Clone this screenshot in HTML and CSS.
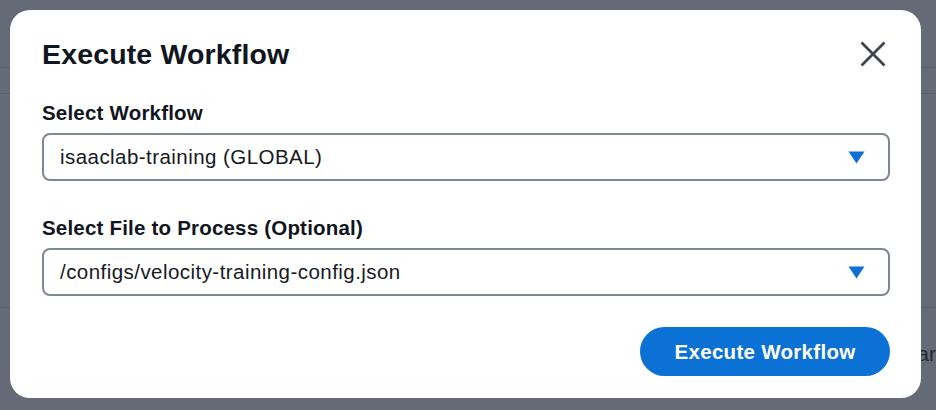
FILE: index.html
```html
<!DOCTYPE html>
<html lang="en">
<head>
<meta charset="utf-8">
<title>Execute Workflow</title>
<link rel="stylesheet" href="styles.css">
</head>
<body>
<div class="page">
  <div class="page-top"></div>
  <div class="page-tabs"></div>
  <div class="page-body"></div>
  <div class="page-foot"><span class="foot-text">ar</span></div>
</div>
<div class="overlay">
  <div class="modal" role="dialog" aria-labelledby="modal-title">
    <div class="modal-header">
      <h2 class="modal-title" id="modal-title">Execute Workflow</h2>
      <button class="close-btn" aria-label="Close">
        <svg width="26" height="26" viewBox="0 0 26 26"><path d="M1.5 1.5 L24.5 24.5 M24.5 1.5 L1.5 24.5" stroke="#3d4652" stroke-width="2.8" fill="none"/></svg>
      </button>
    </div>
    <div class="field field-first">
      <div class="field-label">Select Workflow</div>
      <div class="select-box">
        <span class="select-value">isaaclab-training (GLOBAL)</span>
        <svg class="caret" width="17" height="13" viewBox="0 0 17 13"><path d="M0.5 0.5 H16.5 L8.5 12.5 Z" fill="#0b6fd6"/></svg>
      </div>
    </div>
    <div class="field field-second">
      <div class="field-label">Select File to Process (Optional)</div>
      <div class="select-box">
        <span class="select-value">/configs/velocity-training-config.json</span>
        <svg class="caret" width="17" height="13" viewBox="0 0 17 13"><path d="M0.5 0.5 H16.5 L8.5 12.5 Z" fill="#0b6fd6"/></svg>
      </div>
    </div>
    <div class="modal-actions">
      <button class="primary-btn">Execute Workflow</button>
    </div>
  </div>
</div>
</body>
</html>
```
FILE: styles.css
```css
* { box-sizing: border-box; }
html, body { margin: 0; padding: 0; }
body {
  width: 936px;
  height: 410px;
  overflow: hidden;
  font-family: "Liberation Sans", Arial, Helvetica, sans-serif;
  background: #646b77;
}
.page {
  display: flex;
  flex-direction: column;
  height: 410px;
}
.page-top { height: 68px; border-bottom: 1px solid #59606b; }
.page-tabs { height: 26px; border-bottom: 1px solid #59606b; }
.page-body { height: 214px; border-bottom: 1px solid #59606b; }
.page-foot {
  display: flex;
  justify-content: flex-end;
  padding-top: 34px;
}
.foot-text {
  font-size: 21px;
  color: #25292f;
}
.overlay {
  position: fixed;
  inset: 0;
  display: flex;
  padding: 10px 15px 12px 10px;
}
.modal {
  flex: 1;
  background: #ffffff;
  border-radius: 20px;
  padding: 27px 31px 22px 32px;
  display: flex;
  flex-direction: column;
}
.modal-header {
  display: flex;
  justify-content: space-between;
  align-items: center;
  height: 34px;
}
.modal-title {
  margin: 0;
  font-size: 28.5px;
  line-height: 34px;
  font-weight: 700;
  color: #111520;
  letter-spacing: 0.15px;
}
.close-btn {
  border: 0;
  background: none;
  padding: 0;
  margin-right: 4px;
  width: 26px;
  height: 26px;
  display: flex;
}
.field-first { margin-top: 30px; }
.field-second { margin-top: 35px; }
.field-label {
  font-size: 20.5px;
  line-height: 24px;
  font-weight: 700;
  color: #111520;
  margin-bottom: 8px;
  letter-spacing: 0.2px;
}
.select-box {
  height: 48px;
  border: 2px solid #7e8795;
  border-radius: 8px;
  display: flex;
  align-items: center;
  justify-content: space-between;
  padding: 0 23px 0 16px;
}
.select-value {
  font-size: 20.5px;
  color: #16191f;
  letter-spacing: 0.45px;
}
.caret { display: block; }
.modal-actions {
  margin-top: 31px;
  display: flex;
  justify-content: flex-end;
}
.primary-btn {
  width: 250px;
  height: 49px;
  border: 0;
  border-radius: 999px;
  background: #0b71d4;
  color: #ffffff;
  font-family: inherit;
  font-size: 20.5px;
  font-weight: 700;
  letter-spacing: 0.3px;
  padding: 0;
}
```
